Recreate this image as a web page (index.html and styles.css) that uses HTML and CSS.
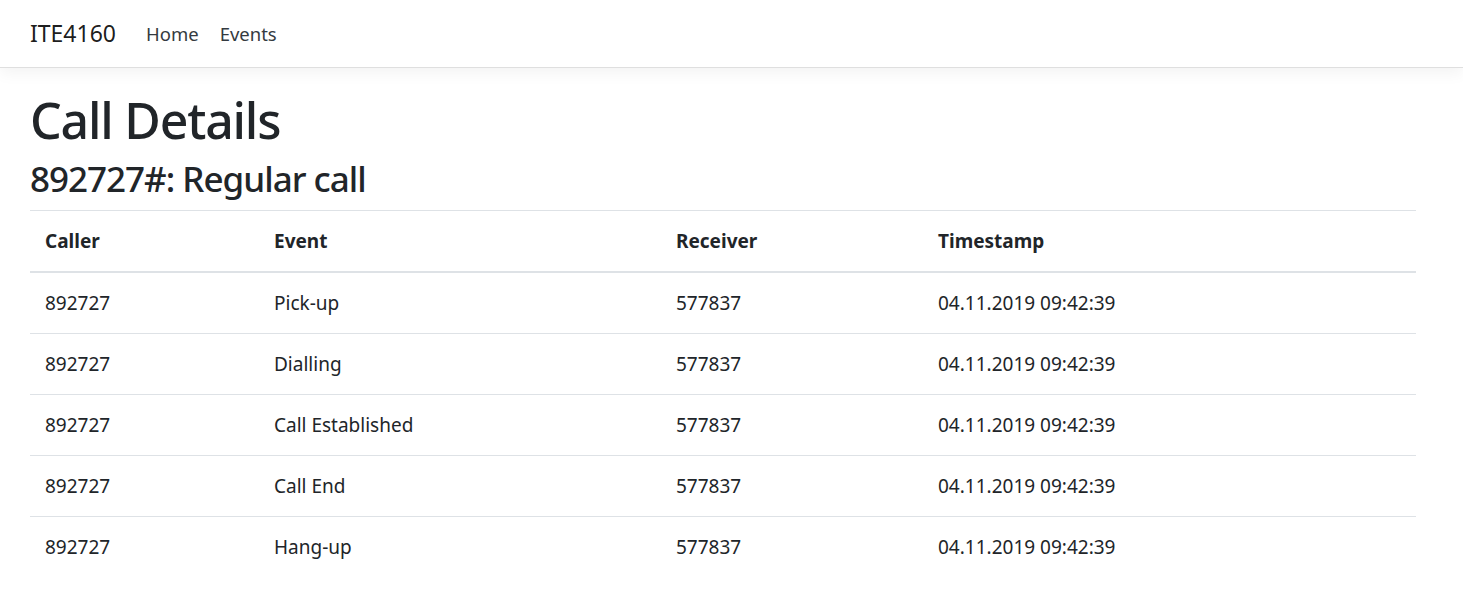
FILE: index.html
```html
<!DOCTYPE html>
<html lang="en">
<head>
<meta charset="utf-8">
<title>Call Details - ITE4160</title>
<link rel="stylesheet" href="styles.css">
</head>
<body>
<header class="navbar">
  <a class="brand" href="#">ITE4160</a>
  <nav class="nav-links">
    <a class="nav-link" href="#">Home</a>
    <a class="nav-link" href="#">Events</a>
  </nav>
</header>
<main class="container">
  <h1 class="title">Call Details</h1>
  <h2 class="subtitle">892727#: Regular call</h2>
  <table class="table">
    <colgroup>
      <col class="col-caller">
      <col class="col-event">
      <col class="col-receiver">
      <col class="col-time">
    </colgroup>
    <thead>
      <tr><th>Caller</th><th>Event</th><th>Receiver</th><th>Timestamp</th></tr>
    </thead>
    <tbody>
      <tr><td>892727</td><td>Pick-up</td><td>577837</td><td>04.11.2019 09:42:39</td></tr>
      <tr><td>892727</td><td>Dialling</td><td>577837</td><td>04.11.2019 09:42:39</td></tr>
      <tr><td>892727</td><td>Call Established</td><td>577837</td><td>04.11.2019 09:42:39</td></tr>
      <tr><td>892727</td><td>Call End</td><td>577837</td><td>04.11.2019 09:42:39</td></tr>
      <tr><td>892727</td><td>Hang-up</td><td>577837</td><td>04.11.2019 09:42:39</td></tr>
    </tbody>
  </table>
</main>
</body>
</html>
```
FILE: styles.css
```css
* { box-sizing: border-box; }
html, body { margin: 0; padding: 0; background: #fff; }
body {
  font-family: "Noto Sans", "Open Sans", "DejaVu Sans", sans-serif;
  font-size: 20px;
  line-height: 1.5;
  color: #212529;
}
.navbar {
  height: 68px;
  display: flex;
  align-items: center;
  padding: 0 30px;
  background: #fff;
  border-bottom: 1px solid #dfdfdf;
  box-shadow: 0 5px 15px rgba(0,0,0,0.05);
  margin-bottom: 22px;
  position: relative;
}
.brand {
  font-size: 23px;
  color: rgba(0,0,0,0.9);
  text-decoration: none;
  margin-right: 30px;
  line-height: 1;
  padding-bottom: 1px;
}
.nav-links { display: flex; gap: 21px; }
.nav-link {
  color: #343a40;
  text-decoration: none;
  font-size: 18.5px;
}
.container { padding: 0 47px 0 30px; }
.title {
  font-size: 50px;
  font-weight: 500;
  line-height: 60px;
  letter-spacing: -1.2px;
  margin: 0 0 5px 0;
}
.subtitle {
  font-size: 35px;
  font-weight: 500;
  line-height: 48px;
  letter-spacing: -1px;
  margin: 0 0 7px 0;
}
.table {
  width: 1386px;
  border-collapse: collapse;
  font-size: 19px;
}
.col-caller { width: 229px; }
.col-event { width: 402px; }
.col-receiver { width: 262px; }
.col-time { width: 493px; }
.table th, .table td {
  text-align: left;
  padding: 15px;
  line-height: 30px;
  vertical-align: top;
  border-top: 1px solid #dee2e6;
}
.table th { font-weight: 700; border-bottom: 2px solid #dee2e6; }
.table tbody tr:first-child td { border-top: 0; }
```
